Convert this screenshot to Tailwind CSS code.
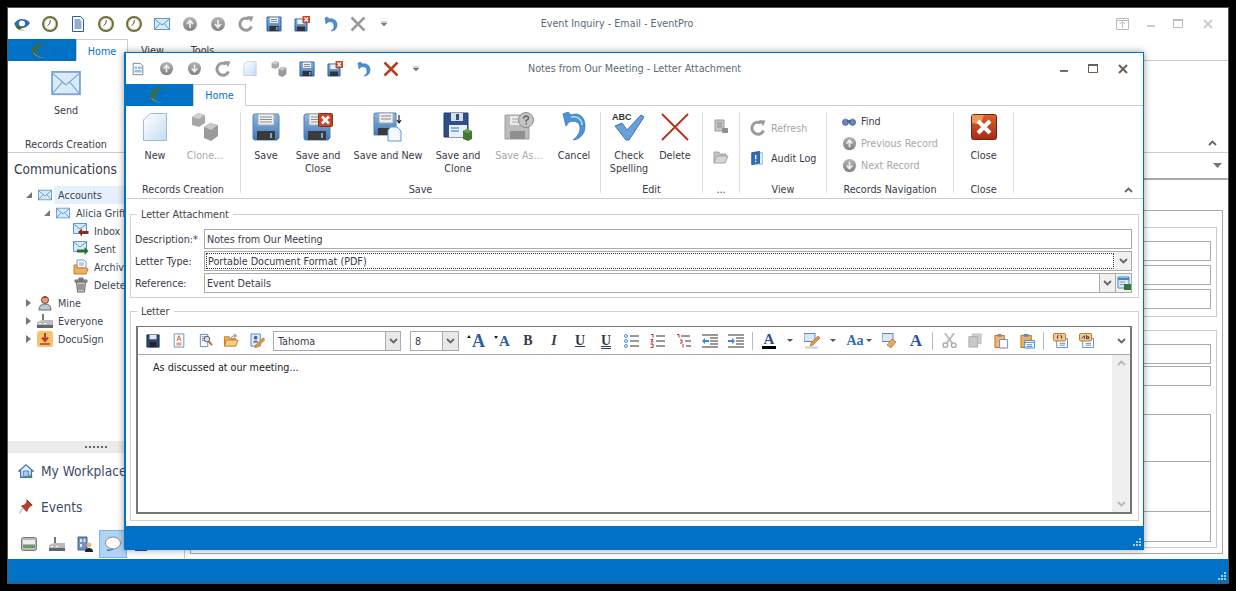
<!DOCTYPE html>
<html lang="en">

<head>
    <meta charset="UTF-8">
    <title>Notes from Our Meeting - Letter Attachment</title>
    <script src="https://cdn.jsdelivr.net/npm/@tailwindcss/browser@4"></script>
</head>

<body class="bg-black w-[1236px] h-[591px] overflow-hidden relative text-[10.7px] leading-[14px] text-[#3a3a4a] font-['DejaVu_Sans_Condensed','Roboto',sans-serif]">
    <!-- shared icons -->
    <svg class="absolute w-0 h-0" aria-hidden="true">
        <defs>
            <linearGradient id="g-page" x1="0" y1="0" x2="1" y2="1"><stop offset="0" stop-color="#ffffff"/><stop offset="1" stop-color="#c4dcf2"/></linearGradient>
            <linearGradient id="g-disk" x1="0" y1="0" x2="0" y2="1"><stop offset="0" stop-color="#8db8e0"/><stop offset="1" stop-color="#3f78b8"/></linearGradient>
            <linearGradient id="g-ball" x1="0" y1="0" x2="0" y2="1"><stop offset="0" stop-color="#b5b5b5"/><stop offset="1" stop-color="#7f7f7f"/></linearGradient>
            <linearGradient id="g-red" x1="0" y1="0" x2="0" y2="1"><stop offset="0" stop-color="#d9622e"/><stop offset="1" stop-color="#a82a16"/></linearGradient>
        </defs>
        <symbol id="clock" viewBox="0 0 16 16"><circle cx="8" cy="8" r="7" fill="#fff" stroke="#6f7038" stroke-width="2"/><circle cx="8" cy="8" r="5.500" fill="none" stroke="#b8b890" stroke-width=".8"/><path d="M8.500 4 7.500 8 5.500 9.500" fill="none" stroke="#555" stroke-width="1"/></symbol>
        <symbol id="doc" viewBox="0 0 16 16"><path d="M2.500.5h8l3 3v12h-11z" fill="#fff" stroke="#2d5c9c"/><path d="M4.500 4h6M4.500 6h7M4.500 8h7M4.500 10h7M4.500 12h7" stroke="#2d5c9c"/></symbol>
        <symbol id="docform" viewBox="0 0 16 16"><path d="M2.500 1.500h8l3 3v10h-11z" fill="#fff" stroke="#777"/><path d="M4 5h3v3H4zM8 5h4v3H8zM4 9h8v3H4z" fill="#8cc0ea"/></symbol>
        <symbol id="mail" viewBox="0 0 16 16"><rect x=".5" y="2.500" width="15" height="11" fill="#dbeaf8" stroke="#5c98d0"/><path d="M.5 3 8 9l7.500-6M.5 13.500 6 7.500M15.500 13.500 10 7.500" fill="none" stroke="#5c98d0"/></symbol>
        <symbol id="up" viewBox="0 0 16 16"><circle cx="8" cy="8" r="7" fill="url(#g-ball)"/><path d="M8 12V5M5 8l3-3.500L11 8" fill="none" stroke="#eee" stroke-width="1.800"/></symbol>
        <symbol id="down" viewBox="0 0 16 16"><circle cx="8" cy="8" r="7" fill="url(#g-ball)"/><path d="M8 4v7M5 8l3 3.500L11 8" fill="none" stroke="#eee" stroke-width="1.800"/></symbol>
        <symbol id="refresh" viewBox="0 0 16 16"><path d="M13.500 10.500A6 6 0 1 1 11 3" fill="none" stroke="#9a9a9a" stroke-width="3"/><path d="M9 0l6.500 .5L13 6z" fill="#9a9a9a"/></symbol>
        <symbol id="disk" viewBox="0 0 16 16"><path d="M1 1h14v14H1z" fill="url(#g-disk)" stroke="#2f5f9c"/><path d="M4 1.500h8V7H4z" fill="#eef2f6"/><path d="M5 3.500h6M5 5.500h6" stroke="#8a8a8a"/><path d="M3.500 10h9v5h-9z" fill="#333"/><path d="M10 11h1.500v3H10z" fill="#7aa6d6"/></symbol>
        <symbol id="diskx" viewBox="0 0 16 16"><path d="M1 3h12v12H1z" fill="url(#g-disk)" stroke="#2f5f9c"/><path d="M3.500 3.500h6V8h-6z" fill="#eef2f6"/><path d="M3 10.500h8V15H3z" fill="#333"/><path d="M8.500 0H16v7H8.500z" fill="#c8452a"/><path d="M10.500 1.500l3.500 4M14 1.500l-3.500 4" stroke="#fff" stroke-width="1.300"/></symbol>
        <symbol id="undo" viewBox="0 0 16 16"><path d="M3 2l1 6 2-2c4-1 6 1 6 4 0 2-1 4-3 5 4 0 6-3 6-6 0-5-4-7-8-6L5.500 1z" fill="#4d8fd0" stroke="#2b6bb0" stroke-width=".5"/></symbol>
        <symbol id="xgray" viewBox="0 0 16 16"><path d="M1.500 1.500l13 13M14.500 1.500l-13 13" stroke="#9a9a9a" stroke-width="2.500"/></symbol>
        <symbol id="xred" viewBox="0 0 16 16"><path d="M1.500 1.500l13 13M14.500 1.500l-13 13" stroke="#b83a22" stroke-width="2.500"/></symbol>
        <symbol id="page" viewBox="0 0 24 28"><path d="M7 .5h16.500v27H.5V7z" fill="url(#g-page)" stroke="#9dbbd6"/></symbol>
        <symbol id="cubes" viewBox="0 0 28 28"><path d="M1 4l6-4 7 2v8l-6 4-7-2z" fill="#a8a8a8"/><path d="M1 4l7 2 6-4-7-2z" fill="#cfcfcf"/><path d="M13 14l6-4 8 2v11l-7 5-7-3z" fill="#9a9a9a"/><path d="M13 14l7 3 7-5-8-2z" fill="#c9c9c9"/></symbol>
        <symbol id="save-lg" viewBox="0 0 28 28"><path d="M1 3q0-2 2-2h23l1 2v22l-2 2H3q-2 0-2-2z" fill="url(#g-disk)" stroke="#4f80b8"/><path d="M6 1h16v11H6z" fill="#eef0f2" stroke="#aaa"/><path d="M8 4h12M8 6.500h12M8 9h12" stroke="#8a8a8a"/><path d="M5 18h18v9H5z" fill="#3a3a3a"/><path d="M18 20h2v5h-2z" fill="#7aa6d6"/></symbol>
        <symbol id="saveclose-lg" viewBox="0 0 30 28"><path d="M1 3q0-2 2-2h23l1 2v22l-2 2H3q-2 0-2-2z" fill="url(#g-disk)" stroke="#4f80b8"/><path d="M6 1h14v11H6z" fill="#eef0f2" stroke="#aaa"/><path d="M8 4h10M8 6.500h10M8 9h10" stroke="#8a8a8a"/><path d="M5 18h18v9H5z" fill="#3a3a3a"/><path d="M18 20h2v5h-2z" fill="#7aa6d6"/><rect x="15.500" y=".5" width="14" height="13" rx="1" fill="#c8452a" stroke="#8a2a14"/><path d="M19 3.500l7 7M26 3.500l-7 7" stroke="#fff" stroke-width="2.500"/></symbol>
        <symbol id="savenew-lg" viewBox="0 0 30 30"><path d="M1 2q0-1 2-1h20v22H1z" fill="url(#g-disk)" stroke="#4f80b8"/><path d="M6 1h14v10H6z" fill="#eef0f2" stroke="#aaa"/><path d="M8 4h10M8 7h10" stroke="#8a8a8a"/><path d="M5 16h12v7H5z" fill="#3a3a3a"/><path d="M18 15h6l4 4v10H15V18z" fill="#f2f8fe" stroke="#5c98d0"/><path d="M26 3v7M24 8l2 3 2-3" fill="none" stroke="#222" stroke-width="1.200"/></symbol>
        <symbol id="saveclone-lg" viewBox="0 0 30 30"><path d="M1 1h24v24H1z" fill="#2f4f88" stroke="#223a66"/><path d="M8 1h12v8H8z" fill="#d8dde6"/><path d="M13 2h3v6h-3z" fill="#2f4f88"/><path d="M6 13h18v12H6z" fill="#e8f0f8"/><path d="M8 16h8M8 19h8" stroke="#6a9ccc" stroke-width="1.500"/><path d="M20 19l4-2 5 2v8l-4 2-5-2z" fill="#3f7a30"/><path d="M20 19l5 2 4-2-5-2z" fill="#6aa050"/></symbol>
        <symbol id="saveas-lg" viewBox="0 0 30 30"><path d="M1 3h24v24H1z" fill="#bcbcbc" stroke="#a0a0a0"/><path d="M6 4h13v9H6z" fill="#eaeaea"/><path d="M8 7h9M8 10h9" stroke="#aaa"/><path d="M6 19h15v8H6z" fill="#8f8f8f"/><circle cx="22" cy="8" r="7.500" fill="#c4c4c4" stroke="#8a8a8a"/><path d="M19.500 6.500q.5-2.500 2.700-2.500t2.300 2q0 1.500-2.300 2.500v1.500M22.200 11v1.500" fill="none" stroke="#666" stroke-width="1.500"/></symbol>
        <symbol id="undo-lg" viewBox="0 0 24 30"><path d="M1 2l3 12 3-4c7-2 11 1 11 6 0 5-3 9-7 12 8-1 12-7 12-14C23 4 16 0 9 3L6 0z" fill="#4d93d8" stroke="#2b6bb0" stroke-width=".7"/><path d="M9 5c6-1 11 2 11 8" fill="none" stroke="#bcd8f4" stroke-width="1.500"/></symbol>
        <symbol id="check-lg" viewBox="0 0 32 30"><path d="M2 14l7-3 5 7L28 3l3 2-15 23h-3z" fill="#6aa0d8" stroke="#3d74b4"/></symbol>
        <symbol id="delete-lg" viewBox="0 0 28 28"><path d="M1 1l26 26M27 1L1 27" stroke="#b03a20" stroke-width="2"/></symbol>
        <symbol id="close-lg" viewBox="0 0 26 26"><rect x=".5" y=".5" width="25" height="25" rx="2" fill="url(#g-red)" stroke="#7a2010"/><path d="M1 1h12l-2 6-5 3-5-1z" fill="#e89a58"/><path d="M7 7l12 12M19 7L7 19" stroke="#fff" stroke-width="4"/></symbol>
        <symbol id="tiny-doc" viewBox="0 0 16 16"><path d="M2 1h9v11H2z" fill="#c8c8c8" stroke="#999"/><path d="M4 4h5M4 6h5M4 8h5" stroke="#8a8a8a"/><path d="M9 9h6v5H9z" fill="#8f8f8f"/></symbol>
        <symbol id="tiny-folder" viewBox="0 0 16 16"><path d="M1 3h5l1 2h6v2H4l-3 7z" fill="#c4c4c4" stroke="#a5a5a5"/><path d="M4 7h11l-3 7H1z" fill="#d6d6d6" stroke="#a5a5a5"/></symbol>
        <symbol id="audit" viewBox="0 0 16 16"><path d="M2 2l9-1.500V14l-9 1.500z" fill="#2f70b8" stroke="#1f4f90"/><path d="M11 2h3v13H5" fill="none" stroke="#7aa6d6"/><path d="M6.500 4.500v5M6.500 11v1.500" stroke="#fff" stroke-width="1.500"/></symbol>
        <symbol id="binoculars" viewBox="0 0 16 16"><circle cx="4" cy="9.500" r="3.500" fill="#6a86b8" stroke="#4a5f8a"/><circle cx="12" cy="9.500" r="3.500" fill="#6a86b8" stroke="#4a5f8a"/><path d="M6 7h4v3H6z" fill="#4a5f8a"/><path d="M2.500 6l1-2h2l.5 2zM10 6l.5-2h2l1 2z" fill="#c5d0e4"/></symbol>
        <symbol id="inbox" viewBox="0 0 16 16"><path d="M.5 .5h13v10H.5z" fill="#dbeaf8" stroke="#5c98d0"/><path d="M.5 1l6.500 5 6.500-5" fill="none" stroke="#5c98d0"/><path d="M5 9l4-3.500V8h6.500v3H9v2.500z" fill="#8c2a20"/></symbol>
        <symbol id="sent" viewBox="0 0 16 16"><path d="M.5 .5h13v10H.5z" fill="#dbeaf8" stroke="#5c98d0"/><path d="M.5 1l6.500 5 6.500-5" fill="none" stroke="#5c98d0"/><path d="M15.500 10l-4-4v2.500H4v3h7.500v2.500z" fill="#2c7030"/></symbol>
        <symbol id="archive" viewBox="0 0 16 16"><path d="M4 1h7l2 2v6H4z" fill="#fff" stroke="#7a9cc8"/><path d="M6 4h5M6 6h5" stroke="#7a9cc8"/><path d="M1 6h3v3h9l2 1-2 5H1z" fill="#f2b060" stroke="#c77a28"/></symbol>
        <symbol id="trash" viewBox="0 0 16 16"><path d="M2 3h12v2H2zM6 1h4v2H6z" fill="#aaa" stroke="#666"/><path d="M3.500 5h9l-1 10h-7z" fill="#c8c8c8" stroke="#666"/><path d="M6 7v6M8 7v6M10 7v6" stroke="#666"/></symbol>
        <symbol id="user" viewBox="0 0 16 16"><circle cx="8" cy="5" r="3.500" fill="#e0a080" stroke="#8c3a28"/><path d="M6 3q2-3 4 0" fill="#8c3a28"/><path d="M2 15q0-6 6-6t6 6z" fill="#bcc8d6" stroke="#667"/></symbol>
        <symbol id="factory" viewBox="0 0 16 16"><path d="M5 1h2v6H5z" fill="#777"/><path d="M0 9l5-2h11v5H0z" fill="#bbb"/><path d="M0 12h16v3H0z" fill="#666"/><path d="M2 10h2v1H2zM7 10h2v1H7z" fill="#fff"/></symbol>
        <symbol id="docusign" viewBox="0 0 16 16"><rect width="16" height="16" rx="2.500" fill="#f5c36a"/><path d="M8 2v7M5 6.500L8 10l3-3.500" fill="none" stroke="#c0392b" stroke-width="2"/><path d="M3 13h10" stroke="#c0392b" stroke-width="1.500"/></symbol>
        <symbol id="home" viewBox="0 0 18 18"><path d="M1 9l8-7 8 7h-2v7H3V9z" fill="#e6f0fa" stroke="#3f78b8" stroke-width="1.500"/><path d="M6 9h6v6H6z" fill="#a9c9ea" stroke="#3f78b8"/><path d="M12 14h4v3h-4z" fill="#4a8a4a"/></symbol>
        <symbol id="pin" viewBox="0 0 18 18"><path d="M10 1l6 6-2 1-3 3-1 3-2-2-2-2-2-2 3-1 3-3z" fill="#c0392b" stroke="#8c2a20"/><path d="M5 11l-3 5" stroke="#bbb" stroke-width="1.500"/></symbol>
        <symbol id="panel" viewBox="0 0 16 16"><rect x=".5" y="1.500" width="15" height="13" rx="2" fill="#b8b8b8" stroke="#777"/><rect x="2" y="4" width="12" height="4" fill="#eee"/><rect x="2" y="9" width="12" height="3" fill="#6a9a6a"/></symbol>
        <symbol id="bldg" viewBox="0 0 16 16"><path d="M1 1h9v13H1z" fill="#6f94c4" stroke="#44618c"/><path d="M3 3h2v3H3zM6.500 3h2v3h-2zM3 8h2v3H3z" fill="#dde7f4"/><circle cx="12" cy="9" r="2.500" fill="#e6b48c"/><path d="M8 16q0-4 4-4t4 4z" fill="#222"/></symbol>
        <symbol id="bubble" viewBox="0 0 16 16"><ellipse cx="8" cy="7" rx="7.500" ry="6" fill="#fff" stroke="#8a8a8a"/><path d="M2 14q3 1 6-1" fill="none" stroke="#3f78b8" stroke-width="1.500"/></symbol>
        <symbol id="note-a" viewBox="0 0 16 16"><path d="M2.500 .5h11v15h-11z" fill="#fff" stroke="#5c88c0"/><path d="M8 2.500L5.500 8.500M8 2.500l2.500 6M6.500 6.500h3" stroke="#d0602a" fill="none"/><path d="M5 11h6M5 13h6" stroke="#d0602a"/></symbol>
        <symbol id="preview" viewBox="0 0 16 16"><path d="M2.500 1.500h8v13h-8z" fill="#fff" stroke="#5c88c0"/><path d="M4 4h4M4 6h3M4 8h3" stroke="#888"/><circle cx="9.500" cy="6.500" r="3" fill="#cfe3f6" stroke="#555"/><path d="M11.500 9l3.500 4" stroke="#b07020" stroke-width="2"/></symbol>
        <symbol id="folder-open" viewBox="0 0 16 16"><path d="M1 4h5l1 2h6v7H1z" fill="#f0b060" stroke="#c07820"/><path d="M3 7.500h12.500L13 14H1z" fill="#f8cf88" stroke="#c07820"/><path d="M8 5q2-3 5-2M11 .8L14 3l-3 1.500" fill="none" stroke="#5c88c0"/></symbol>
        <symbol id="signature" viewBox="0 0 16 16"><path d="M1 1h10v13H1z" fill="#dfe8f4" stroke="#5c88c0"/><circle cx="6" cy="5" r="2" fill="#4a66a0"/><path d="M3 10q3-4 6 0z" fill="#4a66a0"/><path d="M14 5l2 2-8 8-3 1 1-3z" fill="#e09a40" stroke="#a85f18" stroke-width=".6"/></symbol>
        <symbol id="bullets" viewBox="0 0 16 14"><circle cx="2" cy="2" r="1.500" fill="none" stroke="#4a8ccc"/><circle cx="2" cy="7" r="1.500" fill="none" stroke="#4a8ccc"/><circle cx="2" cy="12" r="1.500" fill="none" stroke="#4a8ccc"/><path d="M6 2h9M6 7h9M6 12h9" stroke="#333"/></symbol>
        <symbol id="numbers" viewBox="0 0 16 14"><path d="M1 .5h2v3M.5 5.500h2.500l-2 2.500h2.500M.5 10h2.500v3.500H.5" fill="none" stroke="#b03020"/><path d="M6 2h9M6 7h9M6 12h9" stroke="#333"/></symbol>
        <symbol id="multilevel" viewBox="0 0 16 14"><path d="M1 .5h2v3M4 6h2v3H4M7 10v3.500" fill="none" stroke="#b03020"/><path d="M5 2h9M9 7h6M10 12h5" stroke="#333"/></symbol>
        <symbol id="outdent" viewBox="0 0 16 14"><path d="M0 1h16M8 4h8M8 7h8M8 10h8M0 13h16" stroke="#333"/><path d="M0 7l3-3v2h4v2H3v2z" fill="#3f88d0"/></symbol>
        <symbol id="indent" viewBox="0 0 16 14"><path d="M0 1h16M8 4h8M8 7h8M8 10h8M0 13h16" stroke="#333"/><path d="M7 7L4 4v2H0v2h4v2z" fill="#3f88d0"/></symbol>
        <symbol id="highlight" viewBox="0 0 16 16"><rect x="0" y=".5" width="11" height="8" fill="#dde7f4" stroke="#5c88c0"/><path d="M14 3l2 2-7 7-3 1 1-3z" fill="#e09a40" stroke="#a85f18" stroke-width=".6"/><rect x="1" y="13.500" width="13" height="2" fill="#ccc"/></symbol>
        <symbol id="eraser" viewBox="0 0 16 16"><rect x="0" y=".5" width="11" height="8" fill="#dde7f4" stroke="#5c88c0"/><path d="M10 6l4 3-5 6-4-3z" fill="#e8a860" stroke="#a85f18" stroke-width=".6"/></symbol>
        <symbol id="cut" viewBox="0 0 16 16"><path d="M3 0l8 11M13 0L5 11" stroke="#bbb" stroke-width="2"/><circle cx="3.500" cy="13" r="2.500" fill="none" stroke="#aaa" stroke-width="1.500"/><circle cx="12.500" cy="13" r="2.500" fill="none" stroke="#aaa" stroke-width="1.500"/></symbol>
        <symbol id="copy" viewBox="0 0 16 16"><path d="M5 .5h10v11H5z" fill="#d0d0d0" stroke="#bbb"/><path d="M1 3.500h10v12H1z" fill="#c8c8c8" stroke="#aaa"/></symbol>
        <symbol id="paste" viewBox="0 0 16 16"><path d="M1 2h10v13H1z" fill="#f0b878" stroke="#b87020"/><path d="M4 .5h4v3H4z" fill="#888"/><path d="M6 6.500h8.500v9H6z" fill="#fff" stroke="#5c88c0"/></symbol>
        <symbol id="pastesp" viewBox="0 0 16 16"><path d="M1 2h11v13H1z" fill="#f0b060" stroke="#b87020"/><path d="M4 .5h5v3H4z" fill="#5c88c0"/><path d="M5 7.500h10.500v8H5z" fill="#fff" stroke="#3f88d0"/><path d="M5 9.500h10M7 12h6M7 14h6" stroke="#3f88d0"/></symbol>
        <symbol id="fieldcode" viewBox="0 0 16 16"><path d="M4 6h11.500v9.500H4z" fill="#fff" stroke="#5c88c0"/><path d="M7 11h6M7 13h6" stroke="#5c88c0"/><rect x=".5" y=".5" width="13" height="8" rx="1.500" fill="#f4c890" stroke="#b87020"/><path d="M6 2.500q-1.500 0-1 2t-1 .5M8 2.500q1.500 0 1 2t1 .5" fill="none" stroke="#333"/></symbol>
        <symbol id="fieldab" viewBox="0 0 16 16"><path d="M4 6h11.500v9.500H4z" fill="#fff" stroke="#5c88c0"/><path d="M7 11h6M7 13h6" stroke="#5c88c0"/><rect x=".5" y=".5" width="13" height="8" rx="1.500" fill="#f4c890" stroke="#b87020"/><path d="M3 6q2-3 2.500-3T6 6M8 2v4h2.500V4H8" fill="none" stroke="#333"/></symbol>
        <symbol id="chev-down" viewBox="0 0 9 6"><path d="M1 1l3.500 3.500L8 1" fill="none" stroke="#666" stroke-width="1.800"/></symbol>
        <symbol id="chev-up" viewBox="0 0 9 6"><path d="M1 5l3.500-3.500L8 5" fill="none" stroke="#666" stroke-width="1.800"/></symbol>
        <symbol id="grip" viewBox="0 0 9 9"><path d="M7 0h2v2H7zM4 3h2v2H4zM7 3h2v2H7zM1 6h2v2H1zM4 6h2v2H4zM7 6h2v2H7z" fill="#a8cdea"/></symbol>
        <symbol id="logo" viewBox="0 0 22 18"><path d="M15 1C7 2 1 5 1 9.500c0 2.500 2 4.500 5 5.500-.5-1.500-.5-3 0-5C7 7 11 3 15 1z" fill="#3f6a40"/><path d="M1.500 11c2 4 6 6 13 6-4-.5-7-1-9.500-3.500z" fill="#9a8a4a"/><path d="M11 10.500l9-2.500-1.500 2z" fill="#3a69ac"/></symbol>
        <symbol id="orb" viewBox="0 0 16 16"><path d="M0 8q3-5 8-5t8 4q-3 5-8 5T0 8z" fill="#2f6fb0"/><circle cx="8" cy="7.500" r="3" fill="#fff"/><path d="M1 9q4 3 9 1l-4 4q-4-1-5-5z" fill="#3f6a30"/><path d="M6 14h4" stroke="#d8c040"/></symbol>
    </svg>

    <!-- main window behind the dialog -->
    <div class="absolute left-[7px] top-[7px] w-[1222px] h-[577px] bg-white border border-[#555] flex flex-col">
        <div class="h-[31px] flex items-center shrink-0 relative">
            <div class="flex items-center pl-[6px]">
                <span class="w-[14px] mr-[14px]"><svg class="w-[16px] h-[16px]"><use href="#orb"/></svg></span>
                <span class="w-[28px]"><svg class="w-[16px] h-[16px]"><use href="#clock"/></svg></span>
                <span class="w-[28px]"><svg class="w-[16px] h-[16px]"><use href="#doc"/></svg></span>
                <span class="w-[28px]"><svg class="w-[16px] h-[16px]"><use href="#clock"/></svg></span>
                <span class="w-[28px]"><svg class="w-[16px] h-[16px]"><use href="#clock"/></svg></span>
                <span class="w-[28px]"><svg class="w-[16px] h-[16px]"><use href="#mail"/></svg></span>
                <span class="w-[28px]"><svg class="w-[16px] h-[16px]"><use href="#up"/></svg></span>
                <span class="w-[28px]"><svg class="w-[16px] h-[16px]"><use href="#down"/></svg></span>
                <span class="w-[28px]"><svg class="w-[16px] h-[16px]"><use href="#refresh"/></svg></span>
                <span class="w-[28px]"><svg class="w-[16px] h-[16px]"><use href="#disk"/></svg></span>
                <span class="w-[28px]"><svg class="w-[16px] h-[16px]"><use href="#diskx"/></svg></span>
                <span class="w-[28px]"><svg class="w-[16px] h-[16px]"><use href="#undo"/></svg></span>
                <span class="w-[31px]"><svg class="w-[16px] h-[16px]"><use href="#xgray"/></svg></span>
                <svg class="w-[6px] h-[5px]" viewBox="0 0 6 5"><path d="M0 0h6M0 2h6L3 5z" fill="#777" stroke="#777" stroke-width=".6"/></svg>
            </div>
            <div class="absolute left-0 right-0 text-center text-[#5a6a7a] pr-[2px]">Event Inquiry - Email - EventPro</div>
            <div class="ml-auto flex items-center gap-[17px] pr-[15px]">
                <svg class="w-[13px] h-[12px]" viewBox="0 0 13 12"><path d="M.5.5h12v11H.5zM.5 2.500h12M6.500 10V4M4 6l2.500-2.500L9 6" fill="none" stroke="#bbb"/></svg>
                <svg class="w-[8px] h-[2px] mx-[1px] mt-[4px]" viewBox="0 0 8 2"><path d="M0 0h8v2H0z" fill="#ccc"/></svg>
                <svg class="w-[10px] h-[9px]" viewBox="0 0 10 9"><path d="M.5.500h9v8h-9z" fill="none" stroke="#bbb"/><path d="M0 0h10v2H0z" fill="#bbb"/></svg>
                <svg class="w-[10px] h-[10px] ml-[3px]" viewBox="0 0 10 10"><path d="M1 1l8 8M9 1L1 9" stroke="#ccc" stroke-width="2"/></svg>
            </div>
        </div>

        <div class="h-[22px] flex shrink-0 border-b border-[#ccc]">
            <div class="w-[68px] h-[22px] bg-[#0071c5] flex items-center justify-center"><svg class="w-[22px] h-[18px]"><use href="#logo"/></svg></div>
            <div class="w-[52px] h-[22px] bg-white border border-[#ccc] border-b-white text-center text-[#0071c5] leading-[23px]">Home</div>
            <div class="ml-[13px] text-[#444] leading-[23px]">View</div>
            <div class="ml-[27px] text-[#444] leading-[23px]">Tools</div>
        </div>

        <div class="h-[92px] shrink-0 border-b border-[#ccc] relative flex">
            <div class="w-[116px] flex flex-col items-center pt-[10px]">
                <svg class="w-[30px] h-[26px]" viewBox="0 0 16 14"><rect x=".5" y=".5" width="15" height="12" fill="#dbeaf8" stroke="#7aa6d6"/><path d="M.5 1 8 7.500 15.500 1M.5 12.500 6 6M15.500 12.500 10 6" fill="none" stroke="#7aa6d6" stroke-width=".6"/></svg>
                <div class="mt-[7px]">Send</div>
                <div class="mt-[20px]">Records Creation</div>
            </div>
            <svg class="absolute right-[11px] bottom-[6px] w-[9px] h-[6px]"><use href="#chev-up"/></svg>
        </div>

        <div class="flex-1 flex min-h-0">
            <div class="w-[177px] border-r border-[#ccc] flex flex-col shrink-0">
                <div class="text-[13.6px] leading-[18px] pl-[6px] pt-[7px] text-[#333b4a]">Communications</div>
                <div class="mt-[8px] flex flex-col text-[#3a4658]">
                    <div class="h-[18px] flex items-center pl-[18px]"><svg class="w-[6px] h-[6px] mr-[6px]" viewBox="0 0 6 6"><path d="M6 0v6H0z" fill="#777"/></svg><svg class="w-[14px] h-[14px]"><use href="#mail"/></svg><span class="ml-[2px] pl-[4px] bg-[#e5f0fa] w-[110px] h-[18px] leading-[20px]">Accounts</span></div>
                    <div class="h-[18px] flex items-center pl-[36px]"><svg class="w-[6px] h-[6px] mr-[6px]" viewBox="0 0 6 6"><path d="M6 0v6H0z" fill="#777"/></svg><svg class="w-[14px] h-[14px]"><use href="#mail"/></svg><span class="ml-[6px] pt-[2px]">Alicia Griffin</span></div>
                    <div class="h-[18px] flex items-center pl-[65px]"><svg class="w-[16px] h-[16px]"><use href="#inbox"/></svg><span class="ml-[5px] pt-[2px]">Inbox</span></div>
                    <div class="h-[18px] flex items-center pl-[65px]"><svg class="w-[16px] h-[16px]"><use href="#sent"/></svg><span class="ml-[5px] pt-[2px]">Sent</span></div>
                    <div class="h-[18px] flex items-center pl-[65px]"><svg class="w-[16px] h-[16px]"><use href="#archive"/></svg><span class="ml-[5px] pt-[2px]">Archive</span></div>
                    <div class="h-[18px] flex items-center pl-[65px]"><svg class="w-[16px] h-[16px]"><use href="#trash"/></svg><span class="ml-[5px] pt-[2px]">Deleted</span></div>
                    <div class="h-[18px] flex items-center pl-[18px]"><svg class="w-[5px] h-[8px] mr-[8px]" viewBox="0 0 5 8"><path d="M0 0l5 4-5 4z" fill="#777"/></svg><svg class="w-[16px] h-[16px] -ml-[2px]"><use href="#user"/></svg><span class="ml-[5px] pt-[2px]">Mine</span></div>
                    <div class="h-[18px] flex items-center pl-[18px]"><svg class="w-[5px] h-[8px] mr-[8px]" viewBox="0 0 5 8"><path d="M0 0l5 4-5 4z" fill="#777"/></svg><svg class="w-[16px] h-[16px] -ml-[2px]"><use href="#factory"/></svg><span class="ml-[5px] pt-[2px]">Everyone</span></div>
                    <div class="h-[18px] flex items-center pl-[18px]"><svg class="w-[5px] h-[8px] mr-[8px]" viewBox="0 0 5 8"><path d="M0 0l5 4-5 4z" fill="#777"/></svg><svg class="w-[16px] h-[16px] -ml-[2px]"><use href="#docusign"/></svg><span class="ml-[5px] pt-[2px]">DocuSign</span></div>
                </div>
                <div class="mt-auto">
                    <div class="h-[12px] bg-[#ebebeb] flex items-center justify-center gap-[2px]">
                        <i class="w-[2px] h-[2px] bg-[#666]"></i><i class="w-[2px] h-[2px] bg-[#666]"></i><i class="w-[2px] h-[2px] bg-[#666]"></i><i class="w-[2px] h-[2px] bg-[#666]"></i><i class="w-[2px] h-[2px] bg-[#666]"></i><i class="w-[2px] h-[2px] bg-[#666]"></i>
                    </div>
                    <div class="h-[36px] flex items-center pl-[10px] text-[13.6px] text-[#3a4a6a]"><svg class="w-[16px] h-[16px] mr-[7px]"><use href="#home"/></svg>My Workplace</div>
                    <div class="h-[36px] flex items-center pl-[10px] text-[13.6px] text-[#3a4a6a]"><svg class="w-[16px] h-[16px] mr-[7px]"><use href="#pin"/></svg>Events</div>
                    <div class="h-[34px] flex items-start pt-[5px] pl-[7px]">
                        <span class="w-[28px] h-[28px] flex items-center justify-center"><svg class="w-[16px] h-[16px]"><use href="#panel"/></svg></span>
                        <span class="w-[28px] h-[28px] flex items-center justify-center"><svg class="w-[16px] h-[16px]"><use href="#factory"/></svg></span>
                        <span class="w-[28px] h-[28px] flex items-center justify-center"><svg class="w-[16px] h-[16px]"><use href="#bldg"/></svg></span>
                        <span class="w-[28px] h-[28px] flex items-center justify-center bg-[#b0d4f4] border border-[#7fb3e6]"><svg class="w-[16px] h-[16px]"><use href="#bubble"/></svg></span>
                        <span class="w-[28px] h-[28px] flex items-end justify-center"><i class="w-[12px] h-[3px] mb-[7px] bg-[#3a4aa0]"></i></span>
                    </div>
                </div>
            </div>

            <div class="flex-1 flex flex-col min-w-0">
                <div class="h-[27px] border-b-2 border-[#aaa] flex items-center justify-end pr-[6px] shrink-0"><svg class="w-[9px] h-[5px]" viewBox="0 0 9 5"><path d="M0 0h9L4.500 5z" fill="#777"/></svg></div>
                <div class="flex-1 px-[5px] pt-[30px] pb-[5px] flex flex-col">
                    <div class="flex-1 border border-[#aaa] px-[5px] pb-[5px] pt-[16px] flex flex-col">
                        <div class="border border-[#ccc] h-[90px] px-[5px] pt-[13px] flex flex-col gap-[4px]">
                            <div class="h-[20px] border border-[#aaa]"></div>
                            <div class="h-[20px] border border-[#aaa]"></div>
                            <div class="h-[20px] border border-[#aaa]"></div>
                        </div>
                        <div class="flex-1 mt-[13px] border border-[#ccc] px-[5px] pb-[5px] pt-[13px] flex flex-col">
                            <div class="h-[20px] border border-[#aaa]"></div>
                            <div class="h-[20px] mt-[2px] border border-[#aaa]"></div>
                            <div class="flex-1 mt-[28px] border border-[#aaa] flex flex-col">
                                <div class="h-[47px] border-b border-[#aaa]"></div>
                                <div class="h-[50px] border-b border-[#aaa]"></div>
                                <div class="flex-1"></div>
                            </div>
                        </div>
                    </div>
                </div>
            </div>
        </div>

        <div class="h-[24px] bg-[#0071c5] shrink-0 flex items-end justify-end p-[2px]"><svg class="w-[9px] h-[9px]"><use href="#grip"/></svg></div>
    </div>

    <!-- Letter Attachment dialog -->
    <div class="absolute left-[124px] top-[52px] w-[1020px] h-[498px] bg-white border border-[#0071c5] border-l-2 shadow-[0_0_7px_rgba(0,0,0,0.4)] flex flex-col">
        <div class="h-[31px] flex items-center shrink-0 relative">
            <div class="flex items-center pl-[5px]">
                <span class="w-[28px]"><svg class="w-[14px] h-[14px]"><use href="#docform"/></svg></span>
                <span class="w-[28px]"><svg class="w-[15px] h-[15px]"><use href="#up"/></svg></span>
                <span class="w-[28px]"><svg class="w-[15px] h-[15px]"><use href="#down"/></svg></span>
                <span class="w-[28px]"><svg class="w-[16px] h-[16px]"><use href="#refresh"/></svg></span>
                <span class="w-[28px]"><svg class="w-[14px] h-[15px]"><use href="#page"/></svg></span>
                <span class="w-[28px]"><svg class="w-[16px] h-[16px]"><use href="#cubes"/></svg></span>
                <span class="w-[28px]"><svg class="w-[16px] h-[16px]"><use href="#disk"/></svg></span>
                <span class="w-[28px]"><svg class="w-[16px] h-[16px]"><use href="#diskx"/></svg></span>
                <span class="w-[28px]"><svg class="w-[16px] h-[16px]"><use href="#undo"/></svg></span>
                <span class="w-[30px]"><svg class="w-[16px] h-[16px]"><use href="#xred"/></svg></span>
                <svg class="w-[6px] h-[5px]" viewBox="0 0 6 5"><path d="M0 0h6M0 2h6L3 5z" fill="#777" stroke="#777" stroke-width=".6"/></svg>
            </div>
            <div class="absolute left-0 right-0 text-center text-[#5a6a7a]">Notes from Our Meeting - Letter Attachment</div>
            <div class="ml-auto flex items-center gap-[20px] pr-[15px]">
                <svg class="w-[8px] h-[2px] mt-[5px]" viewBox="0 0 8 2"><path d="M0 0h8v2H0z" fill="#777068"/></svg>
                <svg class="w-[10px] h-[9px]" viewBox="0 0 10 9"><path d="M.5.500h9v8h-9z" fill="none" stroke="#6a5f58"/><path d="M0 0h10v2H0z" fill="#6a5f58"/></svg>
                <svg class="w-[10px] h-[10px]" viewBox="0 0 10 10"><path d="M1 1l8 8M9 1L1 9" stroke="#6a5f58" stroke-width="2"/></svg>
            </div>
        </div>

        <div class="h-[22px] flex shrink-0 border-b border-[#ccc]">
            <div class="w-[67px] h-[22px] bg-[#0071c5] flex items-center justify-center"><svg class="w-[22px] h-[18px]"><use href="#logo"/></svg></div>
            <div class="w-[53px] h-[22px] bg-white border border-[#ccc] border-b-white text-center text-[#0071c5] leading-[22px]">Home</div>
        </div>

        <!-- ribbon -->
        <div class="h-[93px] shrink-0 border-b border-[#ccc] flex relative pt-[6px] leading-[13px]">
            <div class="w-[115px] border-r border-[#ddd] h-[81px] flex flex-col shrink-0">
                <div class="flex-1 flex pl-[4px]">
                    <div class="w-[50px] flex flex-col items-center text-center"><svg class="w-[24px] h-[28px] my-[1px]"><use href="#page"/></svg><div class="mt-[7px]">New</div></div>
                    <div class="w-[50px] flex flex-col items-center text-center text-[#a8a8a8]"><svg class="w-[28px] h-[28px] my-[1px]"><use href="#cubes"/></svg><div class="mt-[7px]">Clone...</div></div>
                </div>
                <div class="text-center -mb-[3px]">Records Creation</div>
            </div>
            <div class="w-[360px] border-r border-[#ddd] h-[81px] flex flex-col shrink-0">
                <div class="flex-1 flex pl-[2px]">
                    <div class="w-[46px] flex flex-col items-center text-center"><svg class="w-[28px] h-[28px] my-[1px]"><use href="#save-lg"/></svg><div class="mt-[7px]">Save</div></div>
                    <div class="w-[58px] flex flex-col items-center text-center"><svg class="w-[30px] h-[28px] my-[1px]"><use href="#saveclose-lg"/></svg><div class="mt-[7px]">Save and Close</div></div>
                    <div class="w-[82px] flex flex-col items-center text-center"><svg class="w-[30px] h-[30px]"><use href="#savenew-lg"/></svg><div class="mt-[7px]">Save and New</div></div>
                    <div class="w-[58px] flex flex-col items-center text-center"><svg class="w-[30px] h-[30px]"><use href="#saveclone-lg"/></svg><div class="mt-[7px]">Save and Clone</div></div>
                    <div class="w-[64px] flex flex-col items-center text-center text-[#a8a8a8]"><svg class="w-[30px] h-[30px]"><use href="#saveas-lg"/></svg><div class="mt-[7px]">Save As...</div></div>
                    <div class="w-[46px] flex flex-col items-center text-center"><svg class="w-[24px] h-[30px]"><use href="#undo-lg"/></svg><div class="mt-[7px]">Cancel</div></div>
                </div>
                <div class="text-center -mb-[3px]">Save</div>
            </div>
            <div class="w-[102px] border-r border-[#ddd] h-[81px] flex flex-col shrink-0">
                <div class="flex-1 flex pl-[3px]">
                    <div class="w-[50px] flex flex-col items-center text-center relative"><svg class="w-[32px] h-[30px]"><use href="#check-lg"/></svg><span class="absolute -top-[1px] left-[8px] text-[9px] font-bold text-[#333] font-['Liberation_Sans',sans-serif]">ABC</span><div class="mt-[7px]">Check Spelling</div></div>
                    <div class="w-[42px] flex flex-col items-center text-center"><svg class="w-[28px] h-[28px] my-[1px]"><use href="#delete-lg"/></svg><div class="mt-[7px]">Delete</div></div>
                </div>
                <div class="text-center -mb-[3px]">Edit</div>
            </div>
            <div class="w-[37px] border-r border-[#ddd] h-[81px] flex flex-col items-center shrink-0">
                <div class="flex-1 flex flex-col items-center pt-[7px] gap-[14px]"><svg class="w-[16px] h-[16px]"><use href="#tiny-doc"/></svg><svg class="w-[16px] h-[16px]"><use href="#tiny-folder"/></svg></div>
                <div class="-mb-[3px]">...</div>
            </div>
            <div class="w-[87px] border-r border-[#ddd] h-[81px] flex flex-col shrink-0">
                <div class="flex-1 flex flex-col pl-[10px] pt-[8px] gap-[14px]">
                    <div class="flex items-center h-[16px] text-[#a8a8a8]"><svg class="w-[16px] h-[16px] mr-[5px]"><use href="#refresh"/></svg>Refresh</div>
                    <div class="flex items-center h-[16px]"><svg class="w-[14px] h-[16px] mr-[7px]"><use href="#audit"/></svg>Audit Log</div>
                </div>
                <div class="text-center -mb-[3px]">View</div>
            </div>
            <div class="w-[127px] border-r border-[#ddd] h-[81px] flex flex-col shrink-0">
                <div class="flex-1 flex flex-col pl-[15px] pt-[1px] gap-[6px]">
                    <div class="flex items-center h-[16px]"><svg class="w-[14px] h-[14px] mr-[5px]"><use href="#binoculars"/></svg>Find</div>
                    <div class="flex items-center h-[16px] text-[#a8a8a8]"><svg class="w-[15px] h-[15px] mr-[4px]"><use href="#up"/></svg>Previous Record</div>
                    <div class="flex items-center h-[16px] text-[#a8a8a8]"><svg class="w-[15px] h-[15px] mr-[4px]"><use href="#down"/></svg>Next Record</div>
                </div>
                <div class="text-center -mb-[3px]">Records Navigation</div>
            </div>
            <div class="w-[60px] border-r border-[#ddd] h-[81px] flex flex-col shrink-0">
                <div class="flex-1 flex flex-col items-center"><svg class="w-[26px] h-[26px] my-[2px]"><use href="#close-lg"/></svg><div class="mt-[7px]">Close</div></div>
                <div class="text-center -mb-[3px]">Close</div>
            </div>
            <svg class="absolute right-[10px] bottom-[5px] w-[9px] h-[6px]"><use href="#chev-up"/></svg>
        </div>

        <!-- form -->
        <div class="flex-1 px-[4px] min-h-0 flex flex-col">
            <fieldset class="mt-[8px] h-[91px] border border-[#d0d0d0] pl-[4px] pr-[6px] shrink-0">
                <legend class="ml-[2px] px-[4px] text-[#444] leading-[14px] relative top-px">Letter Attachment</legend>
                <div class="flex items-center h-[20px] mt-[8px]">
                    <label class="w-[69px] shrink-0 pt-[2px]">Description:*</label>
                    <div class="flex-1 h-[20px] border border-[#aaa] px-[2px] leading-[20px]">Notes from Our Meeting</div>
                </div>
                <div class="flex items-center h-[20px] mt-[2px]">
                    <label class="w-[69px] shrink-0 pt-[2px]">Letter Type:</label>
                    <div class="flex-1 h-[20px] border border-[#aaa] flex">
                        <div class="flex-1 m-[1px] border border-dotted border-[#333] leading-[16px] pl-[1px]">Portable Document Format (PDF)</div>
                        <div class="w-[16px] bg-[#f0f0f0] flex items-center justify-center"><svg class="w-[9px] h-[6px]"><use href="#chev-down"/></svg></div>
                    </div>
                </div>
                <div class="flex items-center h-[20px] mt-[2px]">
                    <label class="w-[69px] shrink-0 pt-[2px]">Reference:</label>
                    <div class="flex-1 h-[20px] border border-[#aaa] flex">
                        <div class="flex-1 px-[2px] leading-[20px]">Event Details</div>
                        <div class="w-[16px] bg-[#f0f0f0] border-l border-[#aaa] flex items-center justify-center"><svg class="w-[9px] h-[6px]"><use href="#chev-down"/></svg></div>
                        <div class="w-[16px] bg-[#f0f0f0] border-l border-[#aaa] flex items-center justify-center"><svg class="w-[14px] h-[14px]" viewBox="0 0 14 14"><path d="M1 1h11v11H1z" fill="#dbeaf8" stroke="#3f88d0"/><path d="M1 3h11" stroke="#3f88d0" stroke-width="2"/><path d="M3 6h5M3 8.500h5" stroke="#999"/><path d="M7 8h7v6H7z" fill="#2f7a30"/></svg></div>
                    </div>
                </div>
            </fieldset>

            <fieldset class="mt-[6px] h-[217px] border border-[#d0d0d0] pl-[5px] pr-[6px] shrink-0">
                <legend class="ml-[1px] px-[4px] text-[#444] leading-[14px] relative top-px">Letter</legend>
                <div class="h-[188px] mt-[8px] border-2 border-t border-[#777] flex flex-col">
                    <div class="h-[28px] border-b border-[#aaa] flex items-center shrink-0 pl-[2px]">
                        <span class="w-[26px] flex justify-center"><svg class="w-[14px] h-[14px]" viewBox="0 0 16 16"><path d="M1 1h14v14H1z" fill="#2c4a70" stroke="#1c2c44"/><path d="M4 1h8v5H4z" fill="#dfe6ee"/><path d="M4 9h8v6H4z" fill="#223"/></svg></span>
                        <span class="w-[26px] flex justify-center"><svg class="w-[14px] h-[15px]"><use href="#note-a"/></svg></span>
                        <span class="w-[26px] flex justify-center"><svg class="w-[15px] h-[15px]"><use href="#preview"/></svg></span>
                        <span class="w-[26px] flex justify-center"><svg class="w-[16px] h-[15px]"><use href="#folder-open"/></svg></span>
                        <span class="w-[26px] flex justify-center"><svg class="w-[15px] h-[15px]"><use href="#signature"/></svg></span>
                        <div class="w-[128px] ml-[3px] h-[20px] border border-[#aaa] flex shrink-0">
                            <div class="flex-1 pl-[4px] leading-[20px]">Tahoma</div>
                            <div class="w-[15px] bg-[#e8e8e8] border-l border-[#aaa] flex items-center justify-center"><svg class="w-[9px] h-[6px]"><use href="#chev-down"/></svg></div>
                        </div>
                        <div class="w-[49px] ml-[9px] h-[20px] border border-[#aaa] flex shrink-0">
                            <div class="flex-1 pl-[4px] leading-[20px]">8</div>
                            <div class="w-[16px] bg-[#e8e8e8] border-l border-[#aaa] flex items-center justify-center"><svg class="w-[9px] h-[6px]"><use href="#chev-down"/></svg></div>
                        </div>
                        <span class="w-[26px] ml-[4px] flex items-center justify-center gap-[1px] text-[18px] leading-[18px] font-bold text-[#2d5f9e] font-['Liberation_Serif',serif]"><svg class="w-[4px] h-[3px] -mt-[8px]" viewBox="0 0 4 3"><path d="M0 3l2-3 2 3z" fill="#222"/></svg>A</span>
                        <span class="w-[26px] flex items-center justify-center gap-[1px] text-[15px] leading-[18px] font-bold text-[#2d5f9e] font-['Liberation_Serif',serif]"><svg class="w-[4px] h-[3px] -mt-[6px]" viewBox="0 0 4 3"><path d="M0 0l2 3 2-3z" fill="#222"/></svg>A</span>
                        <span class="w-[26px] text-center text-[14px] font-bold text-[#333b4a] font-['Liberation_Serif',serif]">B</span>
                        <span class="w-[26px] text-center text-[14px] font-bold italic text-[#333b4a] font-['Liberation_Serif',serif]">I</span>
                        <span class="w-[26px] text-center text-[14px] font-bold underline text-[#333b4a] font-['Liberation_Serif',serif]">U</span>
                        <span class="w-[26px] text-center text-[14px] font-bold underline decoration-double text-[#333b4a] font-['Liberation_Serif',serif]">U</span>
                        <span class="w-[26px] flex justify-center"><svg class="w-[16px] h-[14px]"><use href="#bullets"/></svg></span>
                        <span class="w-[26px] flex justify-center"><svg class="w-[16px] h-[14px]"><use href="#numbers"/></svg></span>
                        <span class="w-[26px] flex justify-center"><svg class="w-[16px] h-[14px]"><use href="#multilevel"/></svg></span>
                        <span class="w-[26px] flex justify-center"><svg class="w-[16px] h-[14px]"><use href="#outdent"/></svg></span>
                        <span class="w-[26px] flex justify-center"><svg class="w-[16px] h-[14px]"><use href="#indent"/></svg></span>
                        <i class="w-px h-[18px] bg-[#bbb] mx-[3px]"></i>
                        <span class="w-[26px] flex flex-col items-center"><span class="text-[15px] leading-[13px] font-bold text-[#2d4f9e] font-['Liberation_Serif',serif]">A</span><i class="w-[14px] h-[3px] bg-black"></i></span>
                        <span class="w-[16px] flex justify-center"><svg class="w-[6px] h-[3px]" viewBox="0 0 6 3"><path d="M0 0h6L3 3z" fill="#555"/></svg></span>
                        <span class="w-[27px] flex justify-center"><svg class="w-[16px] h-[16px]"><use href="#highlight"/></svg></span>
                        <span class="w-[16px] flex justify-center"><svg class="w-[6px] h-[3px]" viewBox="0 0 6 3"><path d="M0 0h6L3 3z" fill="#555"/></svg></span>
                        <span class="w-[36px] flex items-center justify-center gap-[2px] text-[14px] font-bold text-[#2d6fae] font-['Liberation_Serif',serif]">Aa<svg class="w-[6px] h-[3px]" viewBox="0 0 6 3"><path d="M0 0h6L3 3z" fill="#555"/></svg></span>
                        <span class="w-[26px] flex justify-center"><svg class="w-[16px] h-[16px]"><use href="#eraser"/></svg></span>
                        <span class="w-[26px] text-center text-[17px] font-bold text-[#2d4f9e] font-['Liberation_Serif',serif]">A</span>
                        <i class="w-px h-[18px] bg-[#bbb] mx-[3px]"></i>
                        <span class="w-[26px] flex justify-center"><svg class="w-[15px] h-[15px]"><use href="#cut"/></svg></span>
                        <span class="w-[26px] flex justify-center"><svg class="w-[14px] h-[15px]"><use href="#copy"/></svg></span>
                        <span class="w-[26px] flex justify-center"><svg class="w-[15px] h-[16px]"><use href="#paste"/></svg></span>
                        <span class="w-[26px] flex justify-center"><svg class="w-[15px] h-[16px]"><use href="#pastesp"/></svg></span>
                        <i class="w-px h-[18px] bg-[#bbb] mx-[3px]"></i>
                        <span class="w-[26px] flex justify-center"><svg class="w-[15px] h-[15px]"><use href="#fieldcode"/></svg></span>
                        <span class="w-[26px] flex justify-center"><svg class="w-[15px] h-[15px]"><use href="#fieldab"/></svg></span>
                        <svg class="ml-auto mr-[4px] w-[9px] h-[6px]"><use href="#chev-down"/></svg>
                    </div>
                    <div class="flex-1 flex min-h-0">
                        <div class="flex-1 pl-[15px] pt-[6px] text-[#222]">As discussed at our meeting...</div>
                        <div class="w-[18px] bg-[#efefef] flex flex-col items-center justify-between py-[5px]">
                            <svg class="w-[9px] h-[6px] opacity-40"><use href="#chev-up"/></svg>
                            <svg class="w-[9px] h-[6px] opacity-40"><use href="#chev-down"/></svg>
                        </div>
                    </div>
                </div>
            </fieldset>
        </div>

        <div class="h-[23px] bg-[#0071c5] shrink-0 flex items-end justify-end p-[2px]"><svg class="w-[9px] h-[9px]"><use href="#grip"/></svg></div>
    </div>
</body>

</html>
